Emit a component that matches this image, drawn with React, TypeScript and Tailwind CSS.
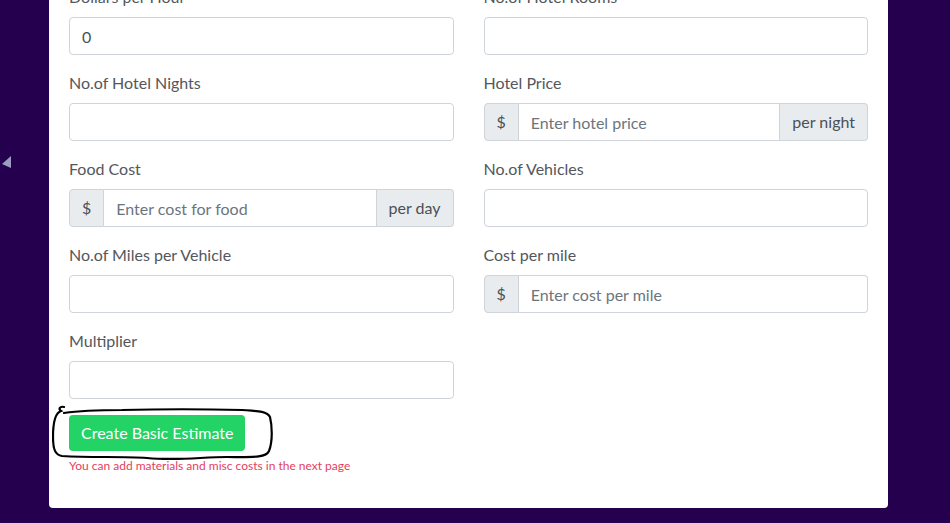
const labelCls = "block mb-2 text-[16px] leading-6 text-[#53575c]";
const inputCls =
  "w-full h-[38px] px-3 border border-[#ced4da] rounded bg-white text-[16px] text-[#495057] placeholder-[#6c757d] outline-none";

function Field({ label, value }: { label: string; value?: string }) {
  return (
    <div className="mb-4">
      <label className={labelCls}>{label}</label>
      <input type="text" defaultValue={value} className={inputCls} />
    </div>
  );
}

function AddonField({
  label,
  placeholder,
  suffix,
}: {
  label: string;
  placeholder: string;
  suffix?: string;
}) {
  return (
    <div className="mb-4">
      <label className={labelCls}>{label}</label>
      <div className="flex h-[38px]">
        <span className="flex items-center px-3 border border-[#ced4da] rounded-l bg-[#e9ecef] text-[#495057]">
          $
        </span>
        <input
          type="text"
          placeholder={placeholder}
          className={
            "flex-1 min-w-0 h-full px-3 border border-l-0 border-[#ced4da] bg-white text-[16px] text-[#495057] placeholder-[#6c757d] outline-none " +
            (suffix ? "" : "rounded-r")
          }
        />
        {suffix && (
          <span className="flex items-center px-3 border border-l-0 border-[#ced4da] rounded-r bg-[#e9ecef] text-[#495057]">
            {suffix}
          </span>
        )}
      </div>
    </div>
  );
}

export default function App() {
  return (
    <div
      className="relative h-[523px] overflow-hidden bg-[#24004f]"
      style={{ fontFamily: "Lato, 'Noto Sans', sans-serif" }}
    >
      {/* left carousel arrow */}
      <svg className="absolute left-[2px] top-[156px]" width="10" height="12" viewBox="0 0 10 12">
        <polygon points="9,0 9,12 0,8" fill="#9c9cc0" />
      </svg>

      <div className="ml-[49px] w-[839px] -mt-[15px] bg-white rounded-b px-5 pb-[34px]">
        <div className="grid grid-cols-2 gap-x-[30px]">
          <Field label="Dollars per Hour" value="0" />
          <Field label="No.of Hotel Rooms" />
          <Field label="No.of Hotel Nights" />
          <AddonField label="Hotel Price" placeholder="Enter hotel price" suffix="per night" />
          <AddonField label="Food Cost" placeholder="Enter cost for food" suffix="per day" />
          <Field label="No.of Vehicles" />
          <Field label="No.of Miles per Vehicle" />
          <AddonField label="Cost per mile" placeholder="Enter cost per mile" />
          <Field label="Multiplier" />
        </div>

        <div className="relative">
          <button className="h-[36px] px-3 rounded bg-[#23d366] text-white text-[16px]">
            Create Basic Estimate
          </button>
          <p className="mt-[7px] text-[12px] leading-4 text-[#e5405e]">
            You can add materials and misc costs in the next page
          </p>
          {/* hand drawn circle annotation */}
          <svg
            className="absolute left-[-17px] top-[-10px] pointer-events-none"
            width="222"
            height="58"
            viewBox="0 0 222 58"
          >
            <path
              d="M12 2 C8 1 6 4 9 6 C3 8 1 20 1 32 C1 44 3 50 10 51 C40 53 70 51 95 53 C125 56 150 52 175 52 C200 52 214 53 217 46 C221 36 220 20 218 12 C215 6 205 6 190 5 C150 4 110 4 70 5 C45 5 25 6 12 8"
              fill="none"
              stroke="#000"
              strokeWidth="2.2"
              strokeLinecap="round"
            />
          </svg>
        </div>
      </div>
    </div>
  );
}
